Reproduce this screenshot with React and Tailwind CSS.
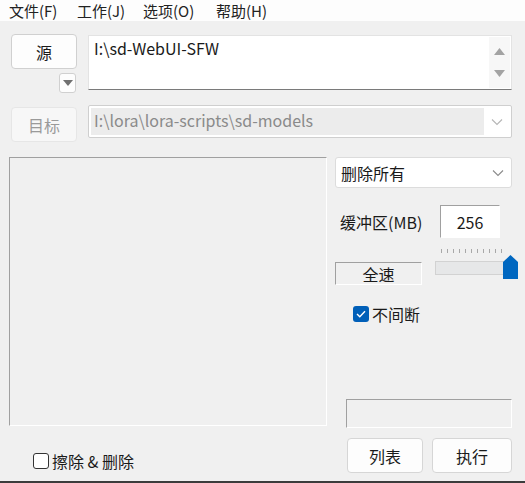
import React from 'react';

const font = { fontFamily: '"Noto Sans CJK SC", "Noto Sans", sans-serif' };

const Chevron = ({ className = 'text-[#8a8a8a]' }) => (
  <svg width="12" height="8" viewBox="0 0 12 8" className={className}>
    <path d="M1 1.5 L6 6.5 L11 1.5" fill="none" stroke="currentColor" strokeWidth="1.1" />
  </svg>
);

const Tri = ({ up }) => (
  <svg width="11" height="7" viewBox="0 0 11 7">
    {up ? <path d="M0 7 L5.5 0 L11 7 Z" fill="#a3a3a3" /> : <path d="M0 0 L11 0 L5.5 7 Z" fill="#a3a3a3" />}
  </svg>
);

const sunken = 'border border-t-[#a0a0a0] border-l-[#a0a0a0] border-r-white border-b-white';

const App = () => {
  return (
    <div className="w-[525px] h-[483px] bg-[#f0f0f0] flex flex-col text-[16px] text-[#1a1a1a] border-b-2 border-[#3c3c3c]" style={font}>
      {/* Menu bar */}
      <div className="h-[21px] bg-[#fdfdfd] flex items-center pl-[9px] text-[15px] leading-none text-[#222]">
        <span className="w-[68px]">文件(F)</span>
        <span className="w-[66px]">工作(J)</span>
        <span className="w-[73px]">选项(O)</span>
        <span>帮助(H)</span>
      </div>

      {/* Source row */}
      <div className="flex pl-[11px] pr-[13px] mt-[13px]">
        <div className="w-[66px] shrink-0 flex flex-col items-end">
          <button className="w-[66px] h-[35px] bg-[#fdfdfd] border border-[#d0d0d0] rounded-[4px] flex items-center justify-center">源</button>
          <div className="mt-[4px] mr-[1px] w-[17px] h-[20px] bg-[#fdfdfd] border border-[#d0d0d0] rounded-[3px] flex items-center justify-center">
            <svg width="10" height="6" viewBox="0 0 10 6"><path d="M0 0 L10 0 L5 6 Z" fill="#707070" /></svg>
          </div>
        </div>
        <div className="ml-[11px] flex-1 h-[55px] mt-[1px] bg-white border border-[#e3e3e3] border-b-[#7a7a7a] flex">
          <div className="flex-1 pl-[5px]">I:\sd-WebUI-SFW</div>
          <div className="w-[21px] bg-[#f7f7f7] flex flex-col items-center justify-between py-[11px] my-[1px] mr-[1px]">
            <Tri up />
            <Tri />
          </div>
        </div>
      </div>

      {/* Target row */}
      <div className="flex pl-[11px] pr-[13px] mt-[13px]">
        <button className="w-[66px] shrink-0 h-[35px] mt-[1px] bg-[#f7f7f7] border border-[#e6e6e6] rounded-[4px] flex items-center justify-center text-[#9a9a9a]">目标</button>
        <div className="ml-[11px] flex-1 h-[33px] -mt-[1px] bg-white border border-[#cfcfcf] rounded-[2px] flex items-center p-[2px]">
          <div className="flex-1 h-full bg-[#ececec] flex items-center pl-[3px] pb-[3px] text-[#8a8a8a]">I:\lora\lora-scripts\sd-models</div>
          <div className="w-[25px] flex justify-center"><Chevron className="text-[#b5b5b5]" /></div>
        </div>
      </div>

      {/* Main area */}
      <div className="flex pl-[9px] pr-[13px] mt-[15px]">
        <div className="w-[318px] shrink-0 flex flex-col">
          <div className={`h-[269px] bg-[#f0f0f0] ${sunken}`} />
          <label className="flex items-center h-[16px] mt-[27px] ml-[24px] leading-none">
            <span className="w-[16px] h-[16px] border border-[#333] rounded-[3px] bg-white" />
            <span className="ml-[3px]">擦除 &amp; 删除</span>
          </label>
        </div>

        <div className="ml-[8px] w-[177px] shrink-0 flex flex-col">
          <div className="h-[31px] bg-white border border-[#dcdcdc] rounded-[3px] flex items-center justify-between pl-[5px] pr-[7px]">
            <span>删除所有</span>
            <Chevron />
          </div>

          <div className="flex items-center mt-[17px]">
            <span className="ml-[5px] w-[100px]">缓冲区(MB)</span>
            <div className={`w-[60px] h-[33px] bg-white flex items-center justify-center ${sunken}`}>256</div>
          </div>

          <div className="flex items-start mt-[8px] h-[39px]">
            <div className={`mt-[16px] w-[87px] h-[23px] flex items-center justify-center leading-none ${sunken}`}>全速</div>
            <div className="relative ml-[13px] w-[68px] h-[33px]">
              <div className="absolute left-[6px] top-[3px] flex gap-[5px]">
                {Array.from({ length: 11 }).map((_, i) => (
                  <span key={i} className="w-[1px] h-[4px] bg-[#a8a8a8]" />
                ))}
              </div>
              <div className="absolute left-0 top-[15px] w-[69px] h-[14px] bg-[#e6e7e8] border border-[#d2d2d2]" />
              <svg className="absolute left-[68px] top-[9px]" width="15" height="24" viewBox="0 0 15 24">
                <path d="M0 7 L7.5 0 L15 7 L15 24 L0 24 Z" fill="#0067c0" />
              </svg>
            </div>
          </div>

          <label className="flex items-center h-[16px] mt-[21px] ml-[18px] leading-none">
            <span className="w-[16px] h-[16px] rounded-[3px] bg-[#005fb8] flex items-center justify-center">
              <svg width="10" height="8" viewBox="0 0 10 8"><path d="M1 4 L3.8 6.8 L9 1.2" fill="none" stroke="white" strokeWidth="1.4" /></svg>
            </span>
            <span className="ml-[3px]">不间断</span>
          </label>

          <div className={`mt-[77px] ml-[11px] h-[29px] ${sunken}`} />

          <div className="flex mt-[10px] ml-[12px] gap-[9px]">
            <button className="w-[76px] h-[35px] bg-[#fdfdfd] border border-[#d6d6d6] rounded-[4px]">列表</button>
            <button className="w-[80px] h-[35px] bg-[#fdfdfd] border border-[#d6d6d6] rounded-[4px]">执行</button>
          </div>
        </div>
      </div>
    </div>
  );
};

export default App;
